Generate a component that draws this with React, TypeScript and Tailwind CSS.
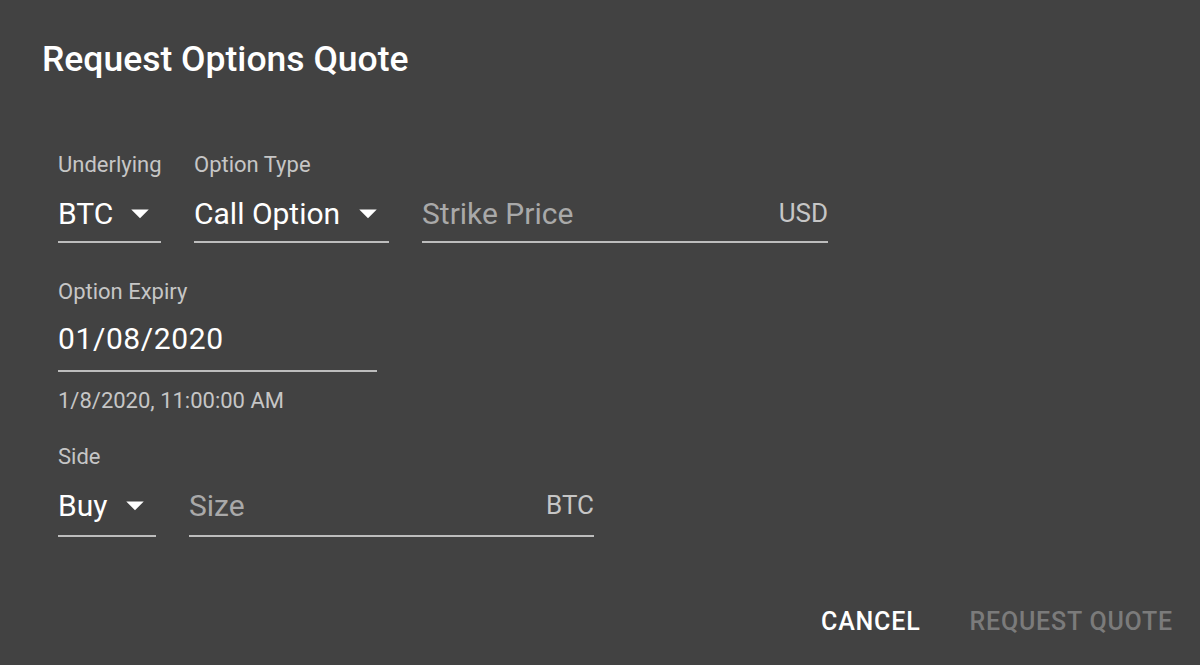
import React from "react";

const font = { fontFamily: "Roboto, 'Noto Sans', sans-serif" };

function Arrow() {
  return (
    <svg viewBox="0 0 24 24" className="absolute right-0 top-1/2 -translate-y-1/2 w-[42px] h-[42px] fill-white">
      <path d="M7 10l5 5 5-5z" />
    </svg>
  );
}

function SelectField({ label, value, width, pad }: { label?: string; value: string; width: string; pad: string }) {
  return (
    <div className={`flex flex-col ${width}`}>
      <div className="h-[22px] text-[22px] leading-[22px] text-[#c6c6c6] whitespace-nowrap">{label}</div>
      <div className={`pt-[17px] ${pad} border-b-2 border-[#bdbdbd]`}>
        <div className="relative h-[40px] flex items-center text-[30px] text-white">
          {value}
          <Arrow />
        </div>
      </div>
    </div>
  );
}

function TextField({ placeholder, unit, width, pad }: { placeholder: string; unit: string; width: string; pad: string }) {
  return (
    <div className={`flex flex-col ${width}`}>
      <div className="h-[22px]" />
      <div className={`pt-[17px] ${pad} border-b-2 border-[#bdbdbd]`}>
        <div className="h-[40px] flex items-center justify-between text-[30px]">
          <span className="text-[#a9a9a9]">{placeholder}</span>
          <span className="text-[#c6c6c6] text-[26px]">{unit}</span>
        </div>
      </div>
    </div>
  );
}

export default function App() {
  return (
    <div className="w-full h-[665px] bg-[#424242] flex flex-col" style={font}>
      <h2 className="pt-[42px] px-[42px] text-[35.5px] leading-[34px] font-medium text-white">
        Request Options Quote
      </h2>

      <div className="pl-[58px] pt-[78px] flex flex-col">
        <div className="flex gap-[33px]">
          <SelectField label="Underlying" value="BTC" width="w-[103px]" pad="pb-[8px]" />
          <SelectField label="Option Type" value="Call Option" width="w-[195px]" pad="pb-[8px]" />
          <TextField placeholder="Strike Price" unit="USD" width="w-[406px]" pad="pb-[8px]" />
        </div>

        <div className="mt-[38px] flex flex-col w-[319px]">
          <div className="h-[22px] text-[22px] leading-[22px] text-[#c6c6c6]">Option Expiry</div>
          <div className="pt-[15px] pb-[12px] border-b-2 border-[#bdbdbd]">
            <div className="h-[40px] flex items-center text-[30px] tracking-[0.6px] text-white">01/08/2020</div>
          </div>
          <div className="mt-[18px] h-[22px] text-[22px] leading-[22px] text-[#c6c6c6]">
            1/8/2020, 11:00:00 AM
          </div>
        </div>

        <div className="mt-[34px] flex gap-[33px]">
          <SelectField label="Side" value="Buy" width="w-[98px]" pad="pb-[10px]" />
          <TextField placeholder="Size" unit="BTC" width="w-[405px]" pad="pb-[10px]" />
        </div>
      </div>

      <div className="mt-auto mb-[30px] flex justify-end gap-[49px] pr-[27px] text-[25px] leading-[26px] font-medium tracking-[0.8px]">
        <span className="text-white">CANCEL</span>
        <span className="text-[#7b7b7b]">REQUEST QUOTE</span>
      </div>
    </div>
  );
}
